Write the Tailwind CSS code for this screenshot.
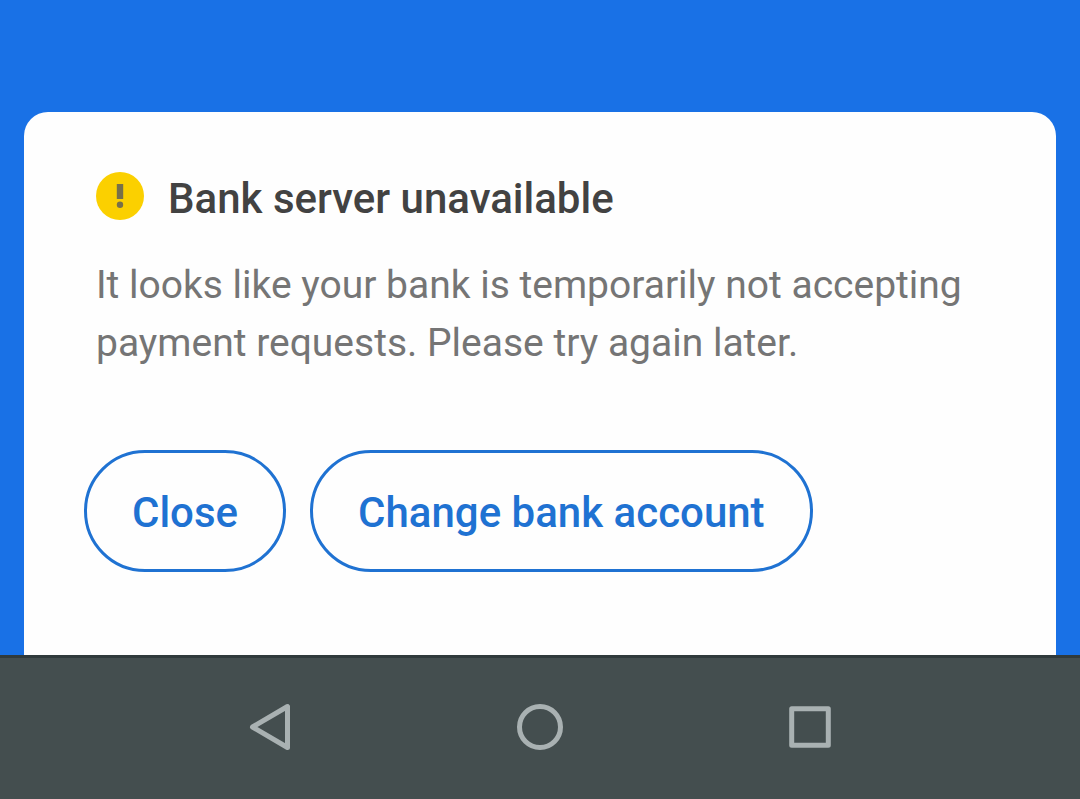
<!DOCTYPE html>
<html lang="en">
  <head>
    <meta charset="UTF-8">
    <meta name="viewport" content="width=device-width, initial-scale=1.0">
    <title>Bank server unavailable</title>
    <script src="https://cdn.jsdelivr.net/npm/@tailwindcss/browser@4"></script>
  </head>
  <body class="flex min-h-screen flex-col bg-[#1971e6] font-[Roboto,sans-serif]">

    <!-- Message card -->
    <main class="flex flex-1 flex-col px-6 pt-28">
      <section class="flex-1 rounded-t-3xl bg-[#fefefe] px-[72px] pt-[60px] pb-20">
        <div class="flex items-start gap-6">
          <svg class="size-12 shrink-0" viewBox="0 0 48 48" aria-hidden="true">
            <circle cx="24" cy="24" r="24" fill="#fbd000" />
            <path d="M20.8 12h6.4v15h-6.4z" fill="#77704a" />
            <circle cx="24" cy="32.7" r="3.2" fill="#77704a" />
          </svg>
          <h1 class="text-[42px] leading-[54px] font-medium text-[#424242]">Bank server unavailable</h1>
        </div>
        <p class="mt-[30px] text-[39px] leading-[58px] text-[#757575]">It looks like your bank is temporarily not accepting payment requests. Please try again later.</p>
        <div class="mt-[78px] -ml-3 flex gap-6">
          <button type="button" class="h-[122px] rounded-full border-3 border-[#1f72d2] px-[45px] pt-[3px] text-[42px] font-medium text-[#1f72d2]">Close</button>
          <button type="button" class="h-[122px] rounded-full border-3 border-[#1f72d2] px-[45px] pt-[3px] text-[42px] font-medium text-[#1f72d2]">Change bank account</button>
        </div>
      </section>
    </main>

    <!-- System navigation -->
    <nav class="flex h-36 items-center justify-center gap-[222px] border-t-3 border-[#303a3c] bg-[#444e4f] pb-[3px]">
      <button type="button" aria-label="Back">
        <svg class="size-12" viewBox="0 0 48 48" fill="none" stroke="#a9b1b2" stroke-width="5" stroke-linejoin="round"><path d="M41.5 3.5v41L6.5 24z" /></svg>
      </button>
      <button type="button" aria-label="Home">
        <svg class="size-12" viewBox="0 0 48 48" fill="none" stroke="#a9b1b2" stroke-width="5"><circle cx="24" cy="24" r="20.5" /></svg>
      </button>
      <button type="button" aria-label="Recent apps">
        <svg class="size-12" viewBox="0 0 48 48" fill="none" stroke="#a9b1b2" stroke-width="5" stroke-linejoin="round"><path d="M5.7 5.7h36.6v36.6H5.7z" /></svg>
      </button>
    </nav>

  </body>
</html>
